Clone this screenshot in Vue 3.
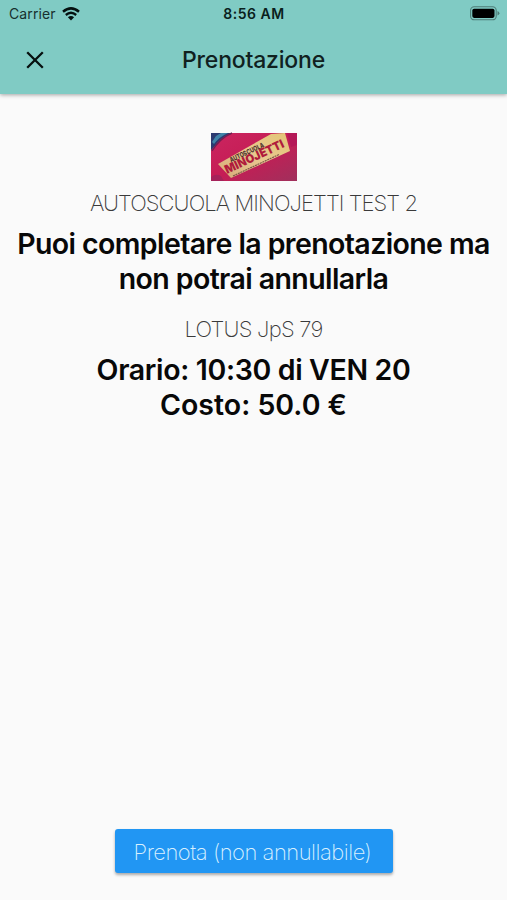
<template>
  <div class="screen">
    <header class="app-bar">
      <div class="status-bar">
        <div class="carrier">
          <span class="carrier-name">Carrier</span>
          <svg class="wifi" viewBox="0 0 18 14" width="18" height="14">
            <path d="M1 4.8 Q9 -2 17 4.8" fill="none" stroke="#04100f" stroke-width="2.5" />
            <path d="M3.8 8 Q9 3.6 14.2 8" fill="none" stroke="#04100f" stroke-width="2.3" />
            <path d="M9 13.4 L5.9 10.2 Q9 7.7 12.1 10.2 Z" fill="#04100f" />
          </svg>
        </div>
        <span class="clock">{{ time }}</span>
        <svg class="battery" viewBox="0 0 30 15" width="30" height="15">
          <rect x="0.6" y="0.8" width="25.6" height="13" rx="3.6" fill="none" stroke="#4d7d77" stroke-width="1.1" />
          <rect x="2.3" y="2.7" width="22.2" height="9.2" rx="1.8" fill="#000" />
          <path d="M27.5 5 Q29.4 5.8 29.4 7.3 Q29.4 8.8 27.5 9.6 Z" fill="#4d7d77" />
        </svg>
      </div>
      <div class="toolbar">
        <button class="close" aria-label="Chiudi">
          <svg viewBox="0 0 18 18" width="18" height="18">
            <path d="M1.2 1.2 L16.8 16.8 M16.8 1.2 L1.2 16.8" stroke="#06100f" stroke-width="2.3" />
          </svg>
        </button>
        <h1 class="title">Prenotazione</h1>
      </div>
    </header>

    <main class="content">
      <svg class="logo" viewBox="0 0 86 48" width="86" height="48">
        <defs>
          <linearGradient id="car" x1="0" y1="0" x2="1" y2="1">
            <stop offset="0" stop-color="#cb2560" />
            <stop offset="0.5" stop-color="#c51d55" />
            <stop offset="1" stop-color="#a0305c" />
          </linearGradient>
          <linearGradient id="label" x1="0" y1="1" x2="1" y2="0">
            <stop offset="0" stop-color="#d6a978" />
            <stop offset="0.5" stop-color="#e8c990" />
            <stop offset="1" stop-color="#e3c575" />
          </linearGradient>
        </defs>
        <rect width="86" height="48" fill="url(#car)" />
        <path d="M0 0 H20 Q9 5 3 14 L0 17 Z" fill="#2c3a70" />
        <path d="M1 9 L5 3 L10 0 H17 Q8 4 3 11 Z" fill="#4083a8" />
        <path d="M21 0 Q9 5 1 18" fill="none" stroke="#721e51" stroke-width="1.4" />
        <path d="M0 44 Q5 40 10 43 L13 48 H0 Z" fill="#a5225a" />
        <path d="M76 0 H86 V12 L80 14 Z" fill="#b41857" />
        <path d="M7 31 L60 1 L74 0 L79 18 L20 45 Z" fill="url(#label)" />
        <text x="20" y="29.5" transform="rotate(-25 20 29.5)" class="logo-small" textLength="37" lengthAdjust="spacingAndGlyphs">AUTOSCUOLA</text>
        <text x="16" y="41" transform="rotate(-25 16 41)" class="logo-name" textLength="64" lengthAdjust="spacingAndGlyphs">MINOJETTI</text>
        <path d="M22 43 L68 21.5" fill="none" stroke="#7d5648" stroke-width="1.2" stroke-dasharray="2 0.7" />
      </svg>
      <p class="caption school">{{ school }}</p>
      <h2 class="headline notice">Puoi completare la prenotazione ma<br>non potrai annullarla</h2>
      <p class="caption vehicle">{{ vehicle }}</p>
      <h2 class="headline details">
        <span class="slot">Orario: {{ slot }}</span>
        <span class="cost">Costo: {{ cost }} €</span>
      </h2>
    </main>

    <footer class="actions">
      <button class="book"><span>Prenota (non annullabile)</span></button>
    </footer>
  </div>
</template>

<script setup>
import { ref } from 'vue'

const time = ref('8:56 AM')
const school = ref('AUTOSCUOLA MINOJETTI TEST 2')
const vehicle = ref('LOTUS JpS 79')
const slot = ref('10:30 di VEN 20')
const cost = ref('50.0')
</script>

<style>
body {
  margin: 0;
  background: #fafafa;
}
</style>

<style scoped>
.screen {
  display: flex;
  flex-direction: column;
  height: 900px;
  overflow: hidden;
  background: #fafafa;
  color: #080808;
  font-family: Inter, "Liberation Sans", sans-serif;
}

.app-bar {
  height: 94px;
  flex: none;
  background: #80cbc4;
  box-shadow: 0 1px 4px rgba(0, 0, 0, 0.35);
}

.status-bar {
  display: grid;
  grid-template-columns: 1fr auto 1fr;
  align-items: center;
  height: 27px;
  padding: 0 7px 0 9px;
}

.carrier {
  display: flex;
  align-items: center;
  gap: 6px;
}

.carrier-name {
  font-size: 14px;
  letter-spacing: 0.1px;
  line-height: 18px;
  color: #17302e;
}

.clock {
  margin-right: 1px;
  font-size: 14px;
  font-weight: 600;
  letter-spacing: 0.5px;
  line-height: 18px;
  color: #0a1f1d;
}

.battery {
  justify-self: end;
}

.toolbar {
  display: grid;
  grid-template-columns: 70px 1fr 70px;
  align-items: center;
  height: 66px;
}

.close {
  display: flex;
  justify-content: center;
  padding: 0;
  border: none;
  background: none;
}

.title {
  margin: 0;
  text-align: center;
  font-size: 23px;
  font-weight: 500;
  letter-spacing: -0.2px;
  line-height: 28px;
  color: #10211f;
}

.content {
  display: flex;
  flex: 1;
  flex-direction: column;
  align-items: center;
  padding-top: 39px;
  text-align: center;
  white-space: nowrap;
}

.logo {
  flex: none;
  overflow: visible;
}

.logo-small {
  font-size: 7px;
  font-weight: 800;
  fill: #50352f;
}

.logo-name {
  font-size: 12px;
  font-weight: 900;
  fill: #b01c3c;
}

.caption {
  margin: 0;
  font-size: 22px;
  font-weight: 200;
  line-height: 28px;
  color: #3a3a3a;
}

.school {
  margin-top: 8px;
  letter-spacing: -0.93px;
}

.headline {
  margin: 0;
  font-size: 28.5px;
  font-weight: 600;
  line-height: 35px;
}

.notice {
  margin-top: 9px;
  letter-spacing: -0.6px;
}

.vehicle {
  margin-top: 19px;
  letter-spacing: -0.75px;
}

.details {
  display: flex;
  flex-direction: column;
  margin-top: 9px;
}

.slot {
  letter-spacing: -0.35px;
}

.actions {
  display: flex;
  justify-content: center;
  padding-bottom: 27px;
}

.book {
  width: 278px;
  height: 44px;
  padding: 0 2px 0 0;
  border: none;
  border-radius: 3px;
  background: #2196f3;
  box-shadow: 0 2px 3px rgba(0, 0, 0, 0.32);
  color: #d8f0ff;
  font-family: inherit;
  font-size: 22px;
  font-weight: 200;
  letter-spacing: -0.5px;
  line-height: 46px;
  white-space: nowrap;
}
</style>
